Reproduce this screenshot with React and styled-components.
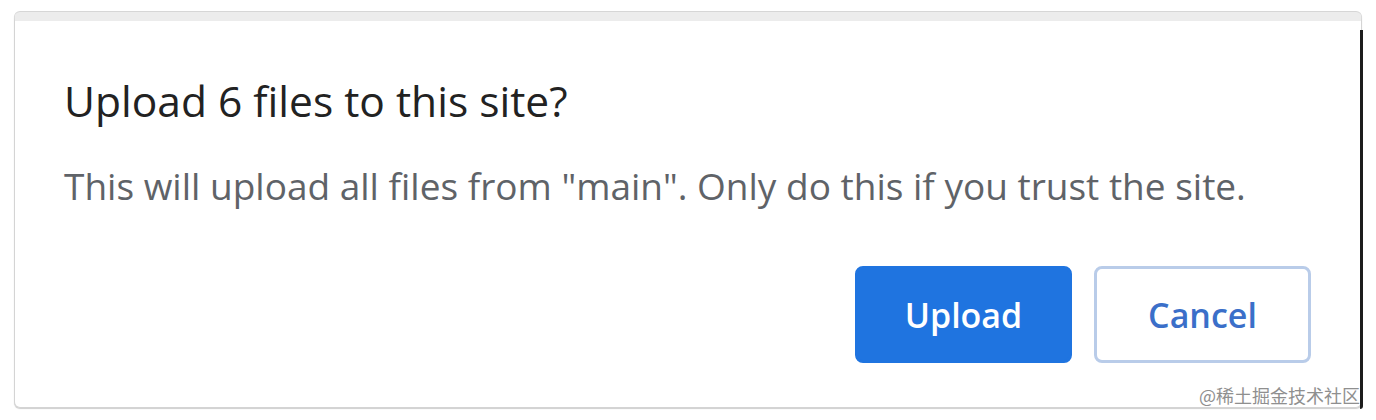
import React from 'react';
import styled, { createGlobalStyle } from 'styled-components';

const GlobalStyle = createGlobalStyle`
  html, body {
    margin: 0;
    padding: 0;
    background: #ffffff;
  }
  body {
    font-family: "Open Sans", "Noto Sans", sans-serif;
  }
`;

const Page = styled.div`
  width: 1376px;
  height: 420px;
  padding: 12px 14px 0 14px;
  box-sizing: border-box;
`;

const Dialog = styled.section`
  position: relative;
  box-sizing: border-box;
  width: 1348px;
  height: 396px;
  background: #fff;
  border: 1px solid #d4d4d4;
  border-top: 9px solid #ececec;
  border-radius: 6px;
  box-shadow: 0 -1px 0 #d6d6d6, 0 1px 1px #cfcfcf;
  padding: 55px 50px 0 49px;
  display: flex;
  flex-direction: column;

  &::after {
    content: '';
    position: absolute;
    right: -2px;
    top: 9px;
    bottom: -2px;
    width: 3px;
    background: #1c1c1c;
    border-radius: 0 0 3px 0;
  }
`;

const Title = styled.h2`
  margin: 0;
  font-weight: 400;
  font-size: 42.5px;
  line-height: 50px;
  color: #222;
`;

const Message = styled.p`
  margin: 38px 0 0 0;
  font-size: 37px;
  line-height: 44px;
  color: #5f6368;
  white-space: nowrap;
`;

const Actions = styled.div`
  display: flex;
  justify-content: flex-end;
  gap: 22px;
  margin-top: 58px;
`;

const Button = styled.button`
  box-sizing: border-box;
  width: 217px;
  height: 97px;
  border-radius: 8px;
  font-family: "Open Sans", "Noto Sans", sans-serif;
  font-size: 34px;
  font-weight: 600;
  cursor: pointer;
  border: 3px solid ${p => (p.primary ? '#1f74e0' : '#b9cce9')};
  background: ${p => (p.primary ? '#1f74e0' : '#ffffff')};
  color: ${p => (p.primary ? '#ffffff' : '#3b6fc9')};
`;

const Watermark = styled.span`
  position: absolute;
  right: 1px;
  bottom: 1px;
  font-family: "Noto Sans CJK SC", sans-serif;
  font-size: 18px;
  line-height: 22px;
  color: #8f8f8f;
`;

const App = () => {
  return (
    <Page>
      <GlobalStyle />
      <Dialog>
        <Title>Upload 6 files to this site?</Title>
        <Message>
          This will upload all files from "main". Only do this if you trust the site.
        </Message>
        <Actions>
          <Button primary>Upload</Button>
          <Button>Cancel</Button>
        </Actions>
        <Watermark>@稀土掘金技术社区</Watermark>
      </Dialog>
    </Page>
  );
};

export default App;
